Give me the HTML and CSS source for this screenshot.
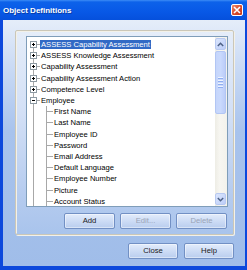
FILE: index.html
```html
<!DOCTYPE html>
<html>
<head>
<meta charset="utf-8">
<link rel="stylesheet" href="styles.css">
</head>
<body>
<div class="window">
  <div class="titlebar">
    <span class="title">Object Definitions</span>
    <span class="close"><svg width="8" height="8" viewBox="0 0 8 8"><path d="M1 1L7 7M7 1L1 7" stroke="#fff" stroke-width="1.6"/></svg></span>
  </div>
  <div class="body">
    <div class="group">
      <div class="tree">
        <div class="items">
          <div class="row"><span class="cell first"><svg class="exp" width="7" height="7"><rect x=".5" y=".5" width="6" height="6" fill="#fff" stroke="#8d9aa3"/><path d="M2 3.5h3M3.5 2v3" stroke="#000"/></svg></span><span class="label sel">ASSESS Capability Assessment</span></div>
          <div class="row"><span class="cell mid"><svg class="exp" width="7" height="7"><rect x=".5" y=".5" width="6" height="6" fill="#fff" stroke="#8d9aa3"/><path d="M2 3.5h3M3.5 2v3" stroke="#000"/></svg></span><span class="label">ASSESS Knowledge Assessment</span></div>
          <div class="row"><span class="cell mid"><svg class="exp" width="7" height="7"><rect x=".5" y=".5" width="6" height="6" fill="#fff" stroke="#8d9aa3"/><path d="M2 3.5h3M3.5 2v3" stroke="#000"/></svg></span><span class="label">Capability Assessment</span></div>
          <div class="row"><span class="cell mid"><svg class="exp" width="7" height="7"><rect x=".5" y=".5" width="6" height="6" fill="#fff" stroke="#8d9aa3"/><path d="M2 3.5h3M3.5 2v3" stroke="#000"/></svg></span><span class="label">Capability Assessment Action</span></div>
          <div class="row"><span class="cell mid"><svg class="exp" width="7" height="7"><rect x=".5" y=".5" width="6" height="6" fill="#fff" stroke="#8d9aa3"/><path d="M2 3.5h3M3.5 2v3" stroke="#000"/></svg></span><span class="label">Competence Level</span></div>
          <div class="row"><span class="cell mid"><svg class="exp" width="7" height="7"><rect x=".5" y=".5" width="6" height="6" fill="#fff" stroke="#8d9aa3"/><path d="M2 3.5h3" stroke="#000"/></svg></span><span class="label">Employee</span></div>
          <div class="row"><span class="cell pass"></span><span class="cell mid"></span><span class="label">First Name</span></div>
          <div class="row"><span class="cell pass"></span><span class="cell mid"></span><span class="label">Last Name</span></div>
          <div class="row"><span class="cell pass"></span><span class="cell mid"></span><span class="label">Employee ID</span></div>
          <div class="row"><span class="cell pass"></span><span class="cell mid"></span><span class="label">Password</span></div>
          <div class="row"><span class="cell pass"></span><span class="cell mid"></span><span class="label">Email Address</span></div>
          <div class="row"><span class="cell pass"></span><span class="cell mid"></span><span class="label">Default Language</span></div>
          <div class="row"><span class="cell pass"></span><span class="cell mid"></span><span class="label">Employee Number</span></div>
          <div class="row"><span class="cell pass"></span><span class="cell mid"></span><span class="label">Picture</span></div>
          <div class="row"><span class="cell pass"></span><span class="cell mid"></span><span class="label">Account Status</span></div>
        </div>
        <div class="scrollbar">
          <div class="sb-btn"><svg width="7" height="5" viewBox="0 0 7 5"><path d="M0.8 4L3.5 1.3L6.2 4" fill="none" stroke="#4d6185" stroke-width="1.5"/></svg></div>
          <div class="thumb"><span class="grip"></span><span class="grip"></span><span class="grip"></span><span class="grip"></span></div>
          <div class="track"></div>
          <div class="sb-btn"><svg width="7" height="5" viewBox="0 0 7 5"><path d="M0.8 1L3.5 3.7L6.2 1" fill="none" stroke="#4d6185" stroke-width="1.5"/></svg></div>
        </div>
      </div>
      <div class="btn-row inner">
        <button class="btn">Add</button>
        <button class="btn" disabled>Edit...</button>
        <button class="btn" disabled>Delete</button>
      </div>
    </div>
    <div class="btn-row outer">
      <button class="btn wide">Close</button>
      <button class="btn wide">Help</button>
    </div>
  </div>
</div>
</body>
</html>
```
FILE: styles.css
```css
* { box-sizing: border-box; }
html, body { margin: 0; padding: 0; }
body {
  width: 247px;
  height: 270px;
  overflow: hidden;
  font-family: "Liberation Sans", Arial, sans-serif;
}
.window {
  width: 247px;
  height: 270px;
  display: flex;
  flex-direction: column;
}
.titlebar {
  height: 20px;
  flex: none;
  display: flex;
  align-items: center;
  justify-content: space-between;
  padding: 0 4px 0 3px;
  background: linear-gradient(#3c8cf6 0, #0d62ea 2px, #0858e6 60%, #0550dc 100%);
}
.title {
  color: #fff;
  font-weight: bold;
  font-size: 8px;
  letter-spacing: 0;
  text-shadow: 1px 1px 0 #0a3ca8;
}
.close {
  width: 12px;
  height: 12px;
  border: 1px solid #fff;
  border-radius: 2px;
  background: linear-gradient(135deg, #f08c6c, #d9492a 55%, #c43a1c);
  display: flex;
  align-items: center;
  justify-content: center;
}
.close svg { display: block; }
.body {
  flex: 1;
  display: flex;
  flex-direction: column;
  border-left: 3px solid #0c48dc;
  border-right: 2px solid #0c48dc;
  border-bottom: 4px solid #0c48dc;
  padding: 10px 11px 0 12px;
  background: linear-gradient(#e5edf9 0%, #c6d8f4 22%, #a8c3ed 45%, #a0bde9 100%);
}
.group {
  height: 205px;
  border: 1px solid #cbc7b8;
  border-radius: 2px;
  box-shadow: inset 1px 1px 0 #f3f1e9, 1px 1px 0 #f3f1e9;
  padding: 5px 5px 5px 10px;
  display: flex;
  flex-direction: column;
  background: linear-gradient(#e5edf9 0%, #d3e0f6 40%, #b6ccef 80%, #a9c4ec 100%);
}
.tree {
  height: 171px;
  flex: none;
  border: 1px solid #7f9db9;
  background: #fff;
  display: flex;
  overflow: hidden;
}
.items {
  flex: 1;
  padding-top: 2px;
  overflow: hidden;
}
.row {
  height: 11.2px;
  display: flex;
  align-items: center;
}
.cell {
  width: 13px;
  height: 100%;
  flex: none;
  display: flex;
  align-items: center;
  padding-left: 3px;
  background-repeat: no-repeat;
}
.cell.first {
  background-image: linear-gradient(#a8a8a8, #a8a8a8), linear-gradient(#a8a8a8, #a8a8a8);
  background-size: 1px 50%, 7px 1px;
  background-position: 6px 100%, 6px 50%;
}
.cell.mid {
  background-image: linear-gradient(#a8a8a8, #a8a8a8), linear-gradient(#a8a8a8, #a8a8a8);
  background-size: 1px 100%, 7px 1px;
  background-position: 6px 0, 6px 50%;
}
.cell.pass {
  background-image: linear-gradient(#a8a8a8, #a8a8a8);
  background-size: 1px 100%;
  background-position: 6px 0;
}
.exp { display: block; }
.label {
  font-size: 7.6px;
  line-height: 9px;
  height: 9px;
  padding: 0 1px;
  white-space: nowrap;
  color: #000;
}
.label.sel {
  background: #316ac5;
  color: #fff;
}
.scrollbar {
  width: 12px;
  flex: none;
  display: flex;
  flex-direction: column;
  background: linear-gradient(90deg, #eeede5, #f7f6f1 40%, #f3f2ec);
  padding: 1px 0 1px 0;
}
.sb-btn {
  height: 12px;
  flex: none;
  margin: 0 1px 0 0;
  border: 1px solid #b8c9f1;
  border-radius: 2px;
  background: linear-gradient(135deg, #dbe6fd, #bccdf8);
  display: flex;
  align-items: center;
  justify-content: center;
}
.sb-btn svg { display: block; }
.thumb {
  height: 63px;
  flex: none;
  margin: 1px 1px 0 0;
  border: 1px solid #b2c6f4;
  border-radius: 2px;
  background: linear-gradient(90deg, #c6d6fb, #c9d9fd 50%, #bccdf8);
  display: flex;
  flex-direction: column;
  align-items: center;
  justify-content: center;
  gap: 1px;
}
.grip {
  width: 5px;
  height: 1px;
  background: #eef4fe;
  box-shadow: 0 1px 0 #90aef0;
  margin-bottom: 1px;
}
.track { flex: 1; }
.btn-row {
  display: flex;
  justify-content: flex-end;
}
.btn-row.inner {
  margin-top: 6px;
  margin-right: 1px;
  gap: 5px;
}
.btn-row.outer {
  margin-top: 8px;
  gap: 6px;
}
.btn {
  width: 51px;
  height: 16px;
  padding: 0;
  margin: 0;
  border: 1px solid #7290c4;
  border-radius: 2px;
  background: linear-gradient(#e3ecfb, #cddcf5 50%, #b9cdee);
  box-shadow: inset 0 0 0 1px rgba(255,255,255,0.45);
  font-family: "Liberation Sans", Arial, sans-serif;
  font-size: 7.7px;
  color: #1a1a1a;
  line-height: 14px;
}
.btn.wide { width: 50px; }
.btn:disabled { color: #9aa4b6; }
```
